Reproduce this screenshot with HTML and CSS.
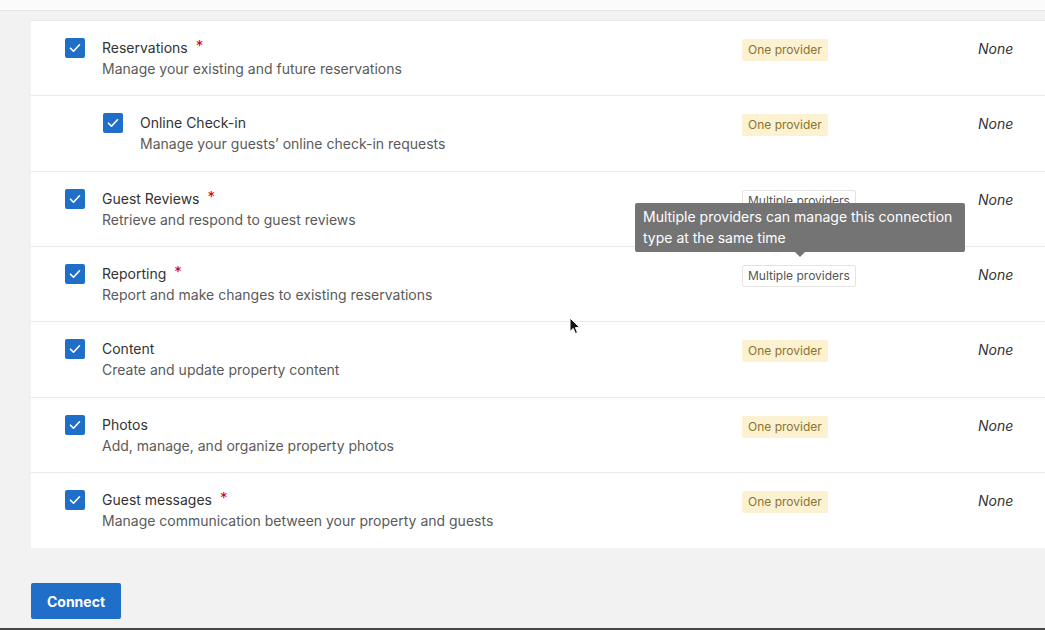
FILE: index.html
```html
<!DOCTYPE html>
<html>
<head>
<meta charset="utf-8">
<link rel="stylesheet" href="styles.css">
</head>
<body>
<div class="page">
  <div class="top-strip"></div>
  <div class="card">
    <div class="row">
      <div class="main"><span class="cb"><svg viewBox="0 0 20 20"><path d="M5.5 10.2l3 3 6-6.4" /></svg></span>
        <div class="text"><div class="title">Reservations <span class="req">*</span></div><div class="desc">Manage your existing and future reservations</div></div></div>
      <div class="badge-cell"><span class="badge one">One provider</span></div>
      <div class="none">None</div>
    </div>
    <div class="row sub">
      <div class="main"><span class="cb"><svg viewBox="0 0 20 20"><path d="M5.5 10.2l3 3 6-6.4" /></svg></span>
        <div class="text"><div class="title">Online Check-in</div><div class="desc">Manage your guests’ online check-in requests</div></div></div>
      <div class="badge-cell"><span class="badge one">One provider</span></div>
      <div class="none">None</div>
    </div>
    <div class="row">
      <div class="main"><span class="cb"><svg viewBox="0 0 20 20"><path d="M5.5 10.2l3 3 6-6.4" /></svg></span>
        <div class="text"><div class="title">Guest Reviews <span class="req">*</span></div><div class="desc">Retrieve and respond to guest reviews</div></div></div>
      <div class="badge-cell"><span class="badge multi">Multiple providers</span></div>
      <div class="none">None</div>
    </div>
    <div class="row">
      <div class="main"><span class="cb"><svg viewBox="0 0 20 20"><path d="M5.5 10.2l3 3 6-6.4" /></svg></span>
        <div class="text"><div class="title">Reporting <span class="req">*</span></div><div class="desc">Report and make changes to existing reservations</div></div></div>
      <div class="badge-cell"><span class="badge multi">Multiple providers</span></div>
      <div class="none">None</div>
    </div>
    <div class="row">
      <div class="main"><span class="cb"><svg viewBox="0 0 20 20"><path d="M5.5 10.2l3 3 6-6.4" /></svg></span>
        <div class="text"><div class="title">Content</div><div class="desc">Create and update property content</div></div></div>
      <div class="badge-cell"><span class="badge one">One provider</span></div>
      <div class="none">None</div>
    </div>
    <div class="row">
      <div class="main"><span class="cb"><svg viewBox="0 0 20 20"><path d="M5.5 10.2l3 3 6-6.4" /></svg></span>
        <div class="text"><div class="title">Photos</div><div class="desc">Add, manage, and organize property photos</div></div></div>
      <div class="badge-cell"><span class="badge one">One provider</span></div>
      <div class="none">None</div>
    </div>
    <div class="row">
      <div class="main"><span class="cb"><svg viewBox="0 0 20 20"><path d="M5.5 10.2l3 3 6-6.4" /></svg></span>
        <div class="text"><div class="title">Guest messages <span class="req">*</span></div><div class="desc">Manage communication between your property and guests</div></div></div>
      <div class="badge-cell"><span class="badge one">One provider</span></div>
      <div class="none">None</div>
    </div>
  </div>
  <div class="actions"><button class="connect">Connect</button></div>
  <div class="tooltip">Multiple providers can manage this connection type at the same time</div>
  <svg class="cursor" viewBox="0 0 12 18" width="12" height="18"><path d="M1 1v13.5l3.2-3.1 2.2 5 2.1-.9-2.1-4.9h4.4z" fill="#111" stroke="#fff" stroke-width="1"/></svg>
  <div class="bottom-bar"></div>
</div>
</body>
</html>
```
FILE: styles.css
```css
* { box-sizing: border-box; }
html, body { margin: 0; padding: 0; }
body {
  width: 1045px;
  height: 630px;
  overflow: hidden;
  background: #f2f2f2;
  font-family: Inter, Roboto, "Noto Sans", sans-serif;
  color: #333;
}
.page {
  position: relative;
  width: 1045px;
  height: 630px;
  display: flex;
  flex-direction: column;
}
.top-strip {
  height: 11px;
  background: #fbfbfb;
  border-bottom: 1px solid #e6e6e6;
}
.card {
  margin: 9px 0 0 31px;
  background: #fff;
  border-top: 1px solid #e9e9e9;
}
.row {
  height: 75.35px;
  display: grid;
  grid-template-columns: 1fr 236px 67px;
  padding-left: 34px;
  padding-top: 17px;
  border-bottom: 1px solid #e9e9e9;
}
.row:last-child { border-bottom: none; }
.main {
  display: flex;
  align-items: flex-start;
  gap: 17px;
}
.row.sub .main { padding-left: 38px; }
.cb {
  width: 20px;
  height: 20px;
  flex: none;
  background: #1f6fc9;
  border-radius: 2px;
  display: flex;
}
.cb svg {
  width: 20px;
  height: 20px;
  fill: none;
  stroke: #fff;
  stroke-width: 1.6;
  stroke-linecap: round;
  stroke-linejoin: round;
}
.text { font-size: 14px; line-height: 20px; }
.title { color: #333; }
.req {
  color: #d0021b;
  font-size: 15px;
  margin-left: 4px;
  position: relative;
  top: -2px;
}
.desc { color: #5a5a5a; margin-top: 1px; }
.badge {
  display: inline-block;
  font-size: 12px;
  line-height: 22px;
  padding: 0 6px;
  border-radius: 2px;
}
.badge.one { background: #fcf2d2; color: #8a7330; }
.badge.multi {
  background: #fff;
  color: #555;
  border: 1px solid #e3e3e3;
  line-height: 20px;
  padding: 0 5px;
}
.none {
  font-style: italic;
  font-size: 14px;
  line-height: 21px;
  color: #333;
}
.actions {
  padding: 35px 0 0 31px;
}
.connect {
  width: 90px;
  height: 36px;
  border: none;
  border-radius: 2px;
  background: #1f6fc9;
  color: #fff;
  font-family: inherit;
  font-size: 14px;
  font-weight: 700;
  cursor: pointer;
}
.tooltip {
  position: absolute;
  left: 635px;
  top: 203px;
  width: 330px;
  height: 49px;
  background: #747474;
  color: #fff;
  font-size: 14px;
  line-height: 21px;
  padding: 3px 8px;
  border-radius: 2px;
}
.tooltip::after {
  content: "";
  position: absolute;
  left: 160px;
  bottom: -5px;
  border-left: 5px solid transparent;
  border-right: 5px solid transparent;
  border-top: 5px solid #747474;
}
.cursor {
  position: absolute;
  left: 569px;
  top: 317px;
}
.bottom-bar {
  position: absolute;
  left: 0;
  bottom: 0;
  width: 100%;
  height: 2px;
  background: #484848;
}
```
